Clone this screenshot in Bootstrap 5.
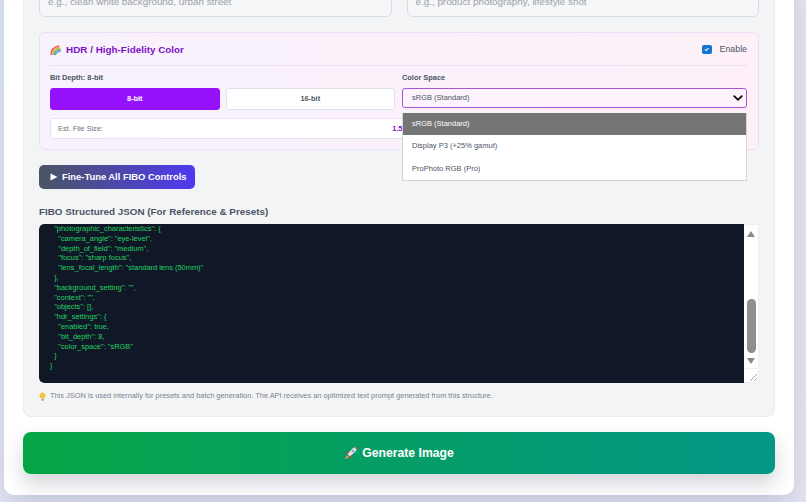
<!DOCTYPE html>
<html lang="en">
<head>
    <meta charset="UTF-8">
    <meta name="viewport" content="width=device-width, initial-scale=1.0">
    <title>Generate Image</title>
    <link href="https://cdn.jsdelivr.net/npm/bootstrap@5.3.0/dist/css/bootstrap.min.css" rel="stylesheet">
    <style>
        html, body { height: 100%; overflow: hidden; }
        body {
            font-family: "Liberation Sans", Arial, sans-serif;
            background: linear-gradient(135deg, #e2e8f5 0%, #e6e6f4 100%);
            color: #374151;
        }
        /* page is photographed scrolled down, so the card starts above the window */
        .page-wrap { padding: 0 12px 0 4px; margin-top: -30px; }
        .main-sheet {
            background: #fff;
            border-radius: 10px;
            padding: 0 19px 21px;
            box-shadow: 0 10px 30px rgba(60, 70, 110, .2);
        }
        .fibo-panel {
            background: #f3f4f6;
            border: 1px solid #e9ebef;
            border-top: 0;
            border-radius: 0 0 8px 8px;
            padding: 0 15px 15px;
            margin-bottom: 15px;
        }
        .text-field-row { gap: 15px; }
        .text-field {
            height: 47px;
            border: 1px solid #d9dce2;
            border-radius: 6px;
            background: #f6f7f9;
            color: #9aa0a9;
            font-size: 9.85px;
            padding: 0 8px 6px;
            display: flex;
            align-items: flex-end;
        }
        .hdr-box {
            height: 118px;
            margin-top: 15px;
            padding: 10px 11px 10px 10px;
            border: 1px solid #efdcf8;
            border-radius: 6px;
            background: linear-gradient(90deg, #f8f2fd 0%, #fdf0f9 100%);
        }
        .hdr-head {
            height: 23px;
            border-bottom: 1px solid #eddff6;
            margin-bottom: 7px;
        }
        .hdr-title { color: #7e12c8; font-size: 9.9px; font-weight: 700; }
        .enable-label { font-size: 8.8px; color: #4b5563; font-weight: 400; }
        .form-check-input.enable-check[type=checkbox] {
            width: 9.5px;
            height: 9.5px;
            margin: 0;
            border-radius: 1.5px;
            background-color: #0f75d8;
            border-color: #0f75d8;
        }
        .hdr-cols { gap: 7px; }
        .bit-cols { gap: 6px; }
        .field-label { font-size: 7.4px; font-weight: 700; color: #4b5563; margin-bottom: 6px; line-height: 9px; }
        .bit-btn {
            flex: 1 1 0;
            height: 22px;
            padding: 0;
            font-size: 7.4px;
            font-weight: 700;
            border-radius: 3px;
        }
        .bit-on, .bit-on:hover { background: #9510fb; border: 1px solid #9510fb; color: #fff; }
        .bit-off, .bit-off:hover { background: #fff; border: 1px solid #dfe2e8; color: #4b5563; }
        .color-select {
            --bs-form-select-bg-img: url("data:image/svg+xml,%3csvg xmlns='http://www.w3.org/2000/svg' viewBox='0 0 16 16'%3e%3cpath fill='none' stroke='%23111' stroke-linecap='round' stroke-linejoin='round' stroke-width='3' d='m2 5 6 6 6-6'/%3e%3c/svg%3e");
            height: 20px;
            padding: 0 20px 0 9px;
            font-size: 7.5px;
            color: #4b5563;
            border: 1px solid #a855d8;
            border-radius: 3px;
            background-color: #fdf3fc;
            background-position: right 3px center;
            background-size: 10px 10px;
        }
        .size-row {
            width: 374px;
            height: 21px;
            margin-top: 8px;
            padding: 0 7px;
            background: #fff;
            border: 1px solid #eddff6;
            border-radius: 3px;
            font-size: 7.4px;
            color: #6b7280;
        }
        .size-value { color: #7e12c8; font-weight: 700; }
        .select-menu {
            position: absolute;
            top: 80px;
            right: 11px;
            width: 345px;
            background: #fff;
            border: 1px solid #d5d5d5;
            border-top: 0;
            z-index: 5;
            font-size: 7.5px;
            color: #4b5563;
        }
        .select-menu div { height: 22.4px; line-height: 22.4px; padding-left: 9px; }
        .select-menu .picked { background: #757575; color: #fff; }
        .tune-btn {
            width: 156px;
            height: 24px;
            padding: 0 0 0 11px;
            margin-top: 15px;
            border: 0;
            border-radius: 5px;
            background: linear-gradient(90deg, #4b5563 0%, #4f39f0 100%);
            color: #fff;
            font-size: 9.4px;
            font-weight: 700;
            white-space: nowrap;
        }
        .json-title { font-size: 9.85px; font-weight: 700; color: #4b5563; margin: 16px 0 6px; line-height: 13px; }
        .json-box { height: 159px; border-radius: 5px 0 0 5px; overflow: hidden; }
        .json-code {
            margin: 0;
            padding: 0 0 0 11px;
            background: #101827;
            color: #22d163;
            font-family: "Liberation Sans", Arial, sans-serif;
            font-size: 7.45px;
            line-height: 9.8px;
            border-radius: 5px 0 0 5px;
            overflow: hidden;
        }
        .fake-scroll {
            width: 15px;
            background: #fff;
            border: 1px solid #eeeff2;
            border-left: 0;
        }
        .scroll-thumb { position: absolute; left: 2.5px; top: 74px; width: 9px; height: 54px; border-radius: 5px; background: #8f8f8f; }
        .scroll-up { position: absolute; left: 3px; top: 6px; }
        .scroll-down { position: absolute; left: 3px; top: 133px; }
        .scroll-grip { position: absolute; left: 0; right: 0; bottom: 0; height: 14px; border-top: 1px solid #eeeff2; }
        .json-note { font-size: 7.4px; color: #7b8290; margin: 8px 0 0; line-height: 10px; }
        .generate-btn {
            width: 100%;
            height: 42px;
            padding: 0;
            border: 0;
            border-radius: 8px;
            background: linear-gradient(90deg, #05a545 0%, #049687 100%);
            color: #fff;
            font-size: 12.2px;
            font-weight: 700;
            box-shadow: 0 10px 20px rgba(30, 40, 60, .2);
        }
    </style>
</head>
<body>
    <div class="page-wrap">
        <div class="main-sheet">
            <div class="fibo-panel">
                <!-- Scene fields, cut off by the top of the window -->
                <div class="text-field-row d-flex">
                    <div class="text-field flex-fill w-50">e.g., clean white background, urban street</div>
                    <div class="text-field flex-fill w-50">e.g., product photography, lifestyle shot</div>
                </div>

                <!-- HDR box -->
                <div class="hdr-box position-relative">
                    <div class="hdr-head d-flex justify-content-between align-items-start">
                        <div class="hdr-title d-flex align-items-center gap-1">
                            <svg width="12" height="11" viewBox="0 0 12 11" fill="none" stroke-width="1.3">
                                <path d="M1 10C1 5.5 4 2 9 1" stroke="#e8504f"/>
                                <path d="M2.5 10C2.5 6.5 5 3.5 10 2.5" stroke="#f2b33d"/>
                                <path d="M4 10C4 7.5 6 5 10.5 4" stroke="#55b56a"/>
                                <path d="M5.5 10C5.5 8.5 7 6.5 11 5.6" stroke="#4a90d9"/>
                            </svg>
                            <span>HDR / High-Fidelity Color</span>
                        </div>
                        <div class="d-flex align-items-center gap-1">
                            <input class="form-check-input enable-check" type="checkbox" checked id="hdrEnable">
                            <label class="enable-label ms-1" for="hdrEnable">Enable</label>
                        </div>
                    </div>
                    <div class="hdr-cols d-flex">
                        <div class="w-50">
                            <div class="field-label">Bit Depth: 8-bit</div>
                            <div class="bit-cols d-flex">
                                <button class="btn bit-btn bit-on">8-bit</button>
                                <button class="btn bit-btn bit-off">16-bit</button>
                            </div>
                        </div>
                        <div class="w-50">
                            <div class="field-label">Color Space</div>
                            <select class="form-select color-select">
                                <option>sRGB (Standard)</option>
                                <option>Display P3 (+25% gamut)</option>
                                <option>ProPhoto RGB (Pro)</option>
                            </select>
                        </div>
                    </div>
                    <div class="size-row d-flex justify-content-between align-items-center">
                        <span>Est. File Size:</span>
                        <span class="size-value">1.5 MB</span>
                    </div>
                    <!-- Open native select list -->
                    <div class="select-menu">
                        <div class="picked">sRGB (Standard)</div>
                        <div>Display P3 (+25% gamut)</div>
                        <div>ProPhoto RGB (Pro)</div>
                    </div>
                </div>

                <button class="btn tune-btn d-flex align-items-center gap-1">
                    <svg width="8" height="8" viewBox="0 0 8 8"><path d="M0.5 0.5 7.5 4 0.5 7.5Z" fill="#fff"/></svg>
                    <span>Fine-Tune All FIBO Controls</span>
                </button>

                <div class="json-title">FIBO Structured JSON (For Reference &amp; Presets)</div>
                <div class="json-box d-flex">
                    <pre class="json-code flex-fill">  "photographic_characteristics": {
    "camera_angle": "eye-level",
    "depth_of_field": "medium",
    "focus": "sharp focus",
    "lens_focal_length": "standard lens (50mm)"
  },
  "background_setting": "",
  "context": "",
  "objects": [],
  "hdr_settings": {
    "enabled": true,
    "bit_depth": 8,
    "color_space": "sRGB"
  }
}</pre>
                    <div class="fake-scroll position-relative">
                        <svg class="scroll-up" width="8" height="6" viewBox="0 0 8 6"><path d="M4 0 8 6H0Z" fill="#8a8a8a"/></svg>
                        <div class="scroll-thumb"></div>
                        <svg class="scroll-down" width="8" height="6" viewBox="0 0 8 6"><path d="M0 0H8L4 6Z" fill="#8a8a8a"/></svg>
                        <div class="scroll-grip">
                            <svg class="d-block ms-auto" width="13" height="13" viewBox="0 0 13 13" stroke="#8a8a8a" stroke-width=".8">
                                <path d="M5 12 12 5M9 12 12 9"/>
                            </svg>
                        </div>
                    </div>
                </div>
                <p class="json-note d-flex align-items-center gap-1">
                    <svg width="7" height="9" viewBox="0 0 7 9"><path d="M3.5 0.5A3 3 0 0 1 5.3 5.9V6.6H1.7V5.9A3 3 0 0 1 3.5 0.5Z" fill="#f5c542"/><path d="M2 7.2H5V8.5H2Z" fill="#9a9a9a"/></svg>
                    <span>This JSON is used internally for presets and batch generation. The API receives an optimized text prompt generated from this structure.</span>
                </p>
            </div>

            <button class="btn generate-btn d-flex align-items-center justify-content-center gap-1">
                <svg width="14" height="14" viewBox="0 0 14 14">
                    <path d="M3.4 8 8.6 2.6C10 1.3 11.8 1 13 1 13 2.2 12.7 4 11.4 5.4L6 10.6Z" fill="#e7dfe6"/>
                    <path d="M10.4 1.4C11.3 1.1 12.3 1 13 1 13 1.7 12.9 2.7 12.6 3.6Z" fill="#d8455a"/>
                    <path d="M3.4 8 1.4 8.4 3.6 5.8 5.6 5.7ZM6 10.6 5.6 12.6 8.2 10.4 8.3 8.4Z" fill="#c9405a"/>
                    <path d="M3 9.2 4.8 11 2 13 1 12Z" fill="#ef9a3d"/>
                    <circle cx="9" cy="5" r="1.2" fill="#6fa8dc"/>
                </svg>
                <span>Generate Image</span>
            </button>
        </div>
    </div>

    <script src="https://cdn.jsdelivr.net/npm/bootstrap@5.3.0/dist/js/bootstrap.bundle.min.js"></script>
</body>
</html>
